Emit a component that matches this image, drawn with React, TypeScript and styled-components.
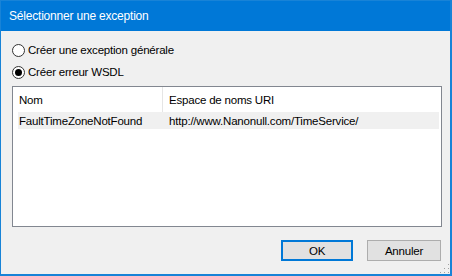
import React, { useState } from 'react';
import styled, { createGlobalStyle } from 'styled-components';

const GlobalStyle = createGlobalStyle`
    html, body {
        margin: 0;
        padding: 0;
        background: #ffffff;
    }
    body {
        font-family: "Liberation Sans", Arial, sans-serif;
        font-size: 11.5px;
        letter-spacing: -0.2px;
        color: #000000;
    }
`;

const StyledWindow = styled.div`
    box-sizing: border-box;
    width: 452px;
    height: 276px;
    border-style: solid;
    border-color: #1883d7;
    border-width: 1px 2px 2px 1px;
    background: #f0f0f0;
    display: flex;
    flex-direction: column;
    position: relative;
`;

const StyledTitleBar = styled.div`
    height: 30px;
    background: #0078d7;
    color: #ffffff;
    font-size: 12px;
    display: flex;
    align-items: center;
    padding-left: 8px;
`;

const StyledBody = styled.div`
    flex: 1;
    display: flex;
    flex-direction: column;
    padding: 8px 0 0 11px;
`;

const StyledRadioRow = styled.label`
    height: 22px;
    display: flex;
    align-items: center;
    gap: 3px;
`;

const StyledRadio = styled.span<{ $checked: boolean }>`
    box-sizing: border-box;
    width: 13px;
    height: 13px;
    border: 1px solid #333333;
    border-radius: 50%;
    background: #ffffff;
    display: flex;
    align-items: center;
    justify-content: center;

    &::after {
        content: '';
        width: 7px;
        height: 7px;
        border-radius: 50%;
        background: ${({ $checked }) => ($checked ? '#000000' : 'transparent')};
    }
`;

const StyledList = styled.div`
    box-sizing: border-box;
    margin-top: 3px;
    width: 430px;
    height: 141px;
    border: 1px solid #828790;
    background: #ffffff;
    padding: 0 2px 0 0;
`;

const StyledHeader = styled.div`
    display: grid;
    grid-template-columns: 150px 1fr;
    height: 25px;
    background: #ffffff;
`;

const StyledHeaderCell = styled.div<{ $divider?: boolean }>`
    display: flex;
    align-items: center;
    padding-left: 6px;
    border-right: ${({ $divider }) => ($divider ? '1px solid #e5e5e5' : 'none')};
`;

const StyledRow = styled.div<{ $selected?: boolean }>`
    display: grid;
    grid-template-columns: 150px 1fr;
    height: 17px;
    margin-left: 5px;
    background: ${({ $selected }) => ($selected ? '#f0f0f0' : 'transparent')};
`;

const StyledCell = styled.div`
    display: flex;
    align-items: center;
    padding-left: 1px;
    white-space: nowrap;
`;

const StyledButtonBar = styled.div`
    display: flex;
    justify-content: flex-end;
    gap: 14px;
    margin-top: 13px;
    padding-right: 9px;
`;

const StyledButton = styled.button<{ $default?: boolean }>`
    box-sizing: border-box;
    width: ${({ $default }) => ($default ? '72px' : '74px')};
    height: 21px;
    font-family: inherit;
    font-size: inherit;
    letter-spacing: inherit;
    color: #000000;
    background: #e1e1e1;
    border: ${({ $default }) => ($default ? '2px solid #0078d7' : '1px solid #adadad')};
    padding: 0;
`;

const StyledGrip = styled.svg`
    position: absolute;
    right: 0;
    bottom: 0;
`;

const rows = [
    { name: 'FaultTimeZoneNotFound', uri: 'http://www.Nanonull.com/TimeService/' },
];

const App = (): JSX.Element => {
    const [choice, setChoice] = useState<string>('wsdl');

    return (
        <>
            <GlobalStyle />
            <StyledWindow>
                <StyledTitleBar>Sélectionner une exception</StyledTitleBar>
                <StyledBody>
                    <StyledRadioRow onClick={(): void => setChoice('general')}>
                        <StyledRadio $checked={choice === 'general'} />
                        Créer une exception générale
                    </StyledRadioRow>
                    <StyledRadioRow onClick={(): void => setChoice('wsdl')}>
                        <StyledRadio $checked={choice === 'wsdl'} />
                        Créer erreur WSDL
                    </StyledRadioRow>
                    <StyledList>
                        <StyledHeader>
                            <StyledHeaderCell $divider>Nom</StyledHeaderCell>
                            <StyledHeaderCell>Espace de noms URI</StyledHeaderCell>
                        </StyledHeader>
                        {rows.map((row) => (
                            <StyledRow key={row.name} $selected>
                                <StyledCell>{row.name}</StyledCell>
                                <StyledCell>{row.uri}</StyledCell>
                            </StyledRow>
                        ))}
                    </StyledList>
                    <StyledButtonBar>
                        <StyledButton $default>OK</StyledButton>
                        <StyledButton>Annuler</StyledButton>
                    </StyledButtonBar>
                </StyledBody>
                <StyledGrip width="12" height="12" viewBox="0 0 12 12">
                    {[[10, 2], [10, 6], [6, 6], [10, 10], [6, 10], [2, 10]].map(([x, y]) => (
                        <rect key={`${x}-${y}`} x={x} y={y} width="1" height="1" fill="#a0a0a0" />
                    ))}
                </StyledGrip>
            </StyledWindow>
        </>
    );
}

export default App
